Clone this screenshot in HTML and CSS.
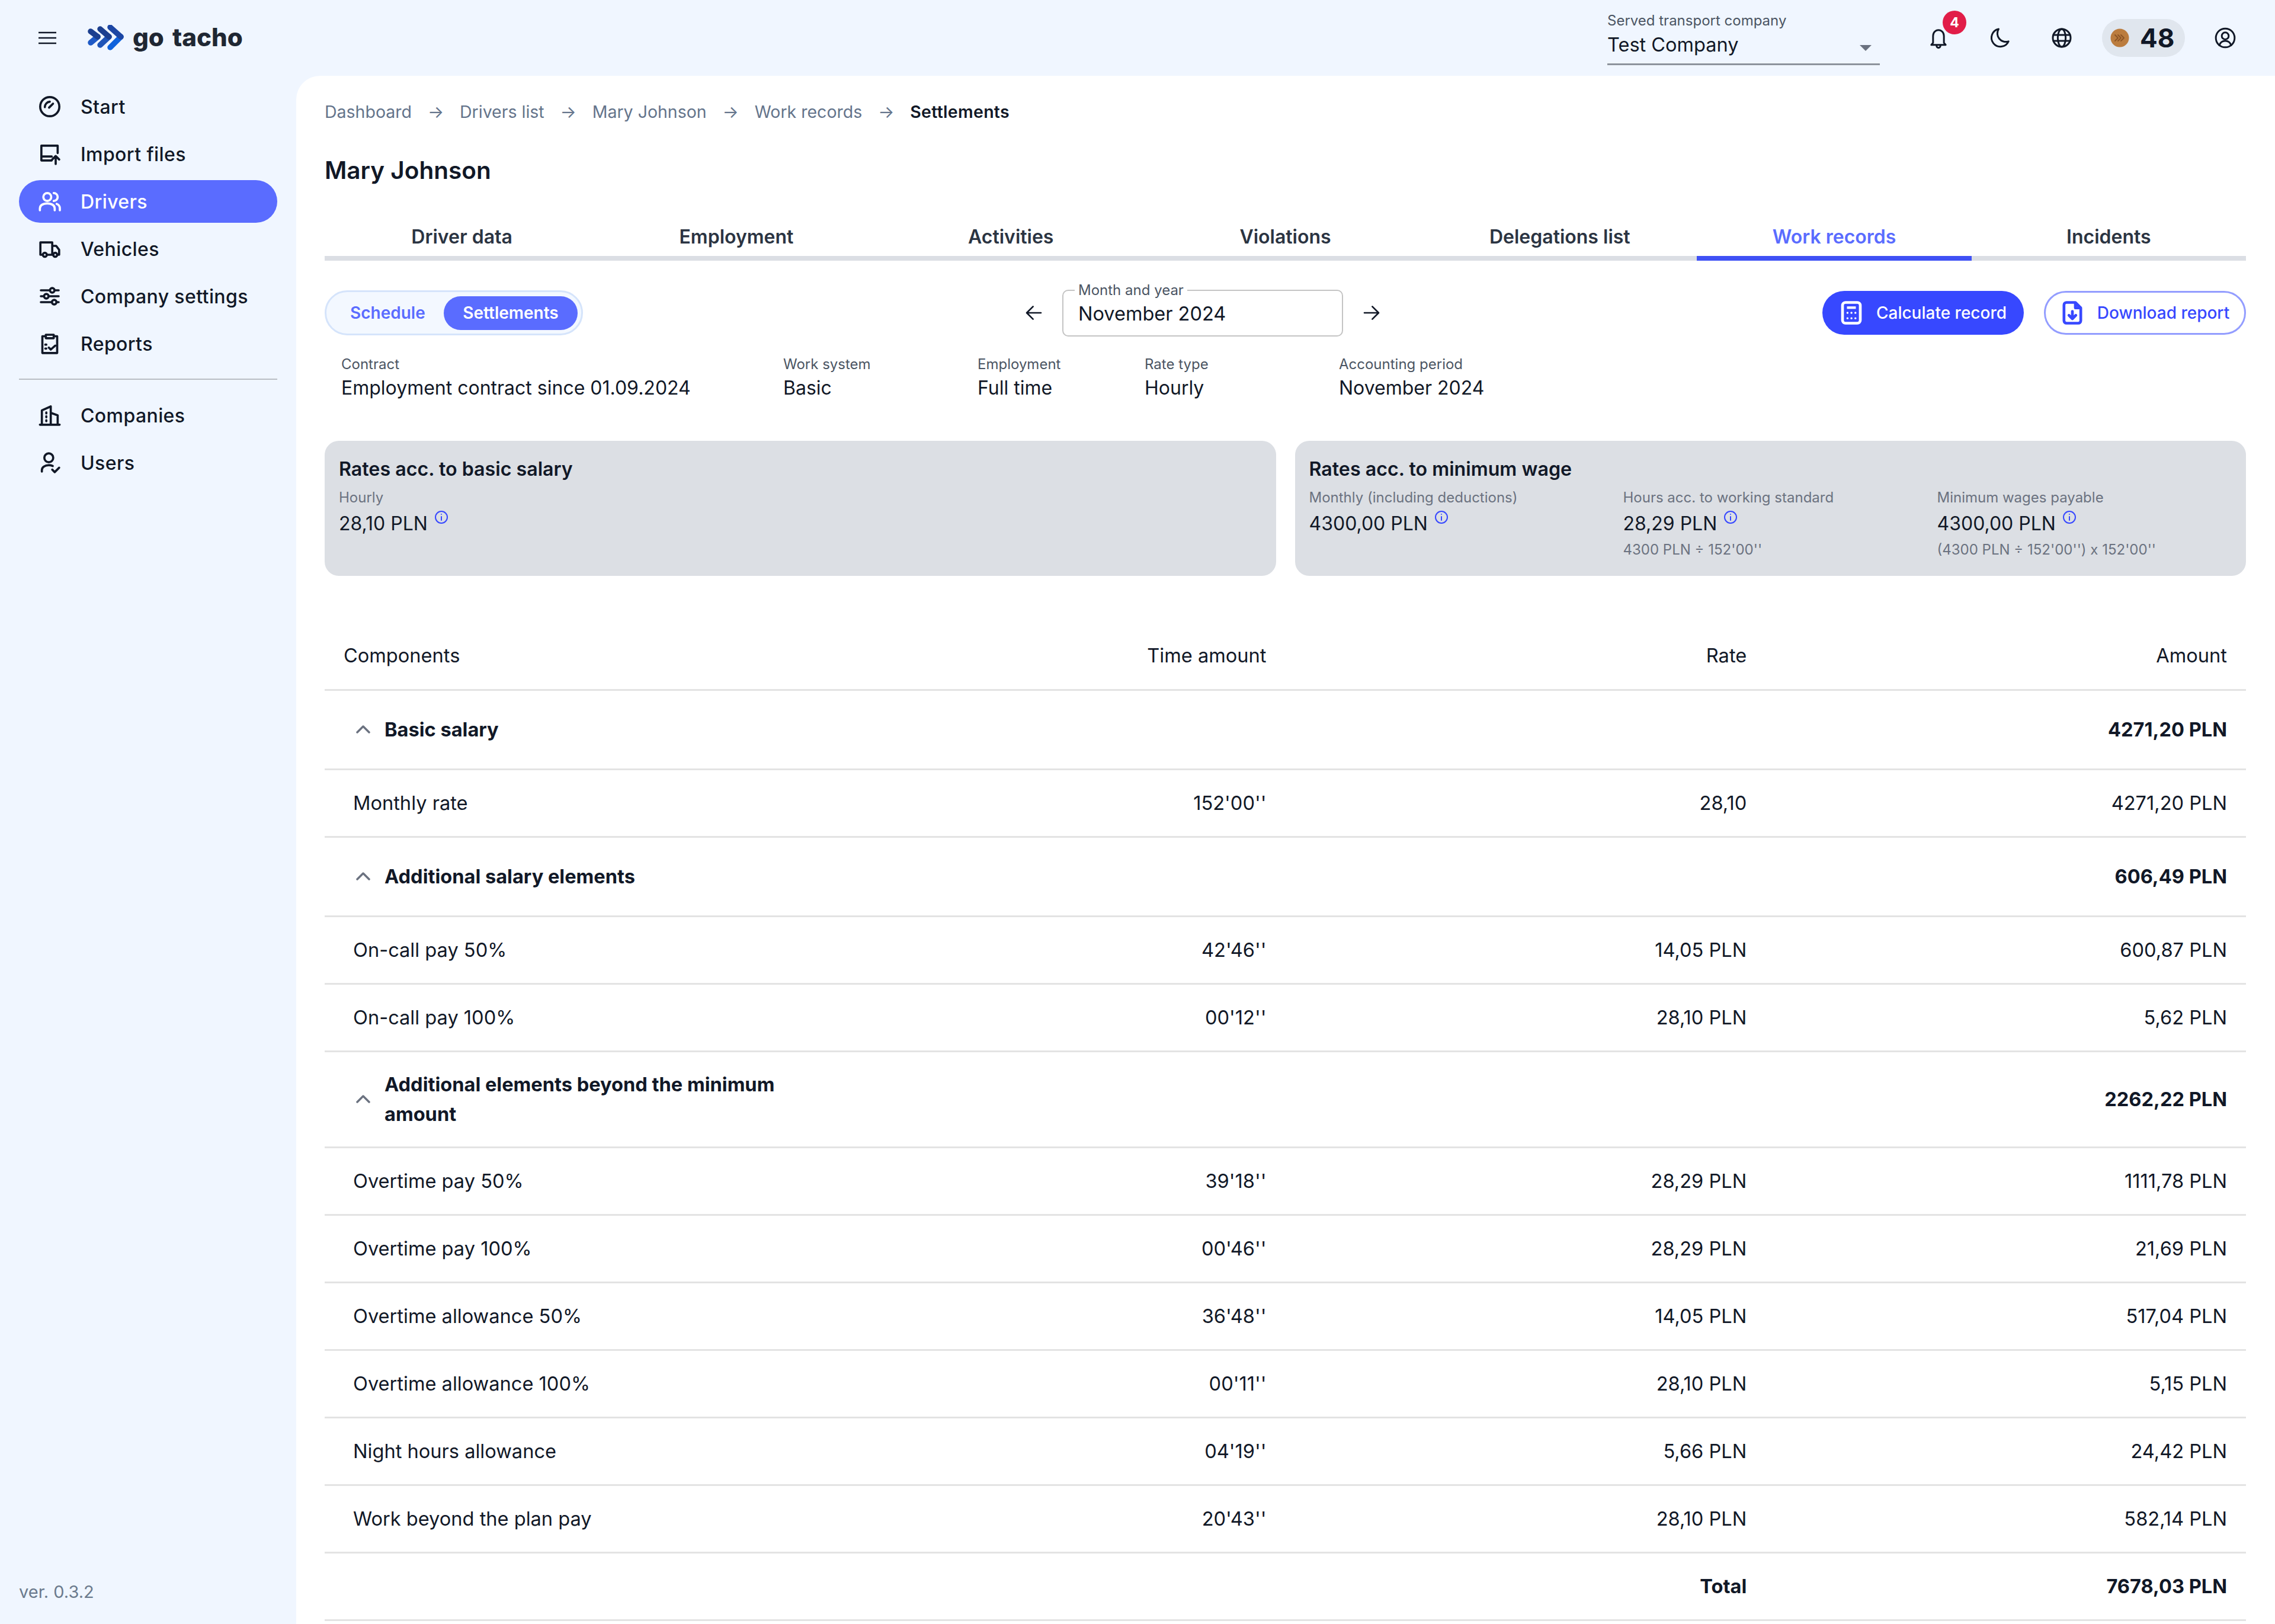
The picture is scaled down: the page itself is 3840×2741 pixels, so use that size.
FILE: index.html
```html
<!DOCTYPE html>
<html>

<head>
    <meta charset="UTF-8">
    <link rel="stylesheet" href="styles.css">
</head>

<body>
    <div class="app">
        <header class="topbar">
            <div class="brand">
                <svg class="burger" viewBox="0 0 30 22"><path d="M0 2h30M0 11h30M0 20h30" /></svg>
                <svg class="logo" viewBox="0 0 61 44">
                    <path d="M5 30l12-10" stroke="#1f5ac6" />
                    <path d="M5 11l12 9" stroke="#1c3f8f" />
                    <path d="M21 34l15-14" stroke="#1f55b8" />
                    <path d="M21 7l15 13" stroke="#1c3f8f" />
                    <path d="M38 38l18-18" stroke="#0f62dc" />
                    <path d="M38 4l18 16" stroke="#1c46a4" />
                </svg>
                <span class="brand-name">go tacho</span>
            </div>
            <div class="topbar-right">
                <div class="company-select">
                    <div class="company-label">Served transport company</div>
                    <div class="company-value">Test Company</div>
                    <span class="company-arrow"></span>
                </div>
                <div class="top-icon bell">
                    <svg viewBox="0 0 24 24"><path d="M6.500 17V10a5.500 6 0 0 1 11 0v7l1.800 2H4.700zM10 19.500a2 2.500 0 0 0 4 0" /></svg>
                    <span class="badge">4</span>
                </div>
                <div class="top-icon">
                    <svg viewBox="0 0 24 24"><path d="M10.500 3a9 9 0 1 0 10 12.500A8.500 8.500 0 0 1 10.500 3z" /></svg>
                </div>
                <div class="top-icon">
                    <svg viewBox="0 0 24 24"><circle cx="12" cy="12" r="9" /><ellipse cx="12" cy="12" rx="4" ry="9" /><path d="M3.600 9h16.800M3.600 15h16.800" /></svg>
                </div>
                <div class="points">
                    <svg class="coin" viewBox="0 0 32 32">
                        <circle cx="16" cy="16" r="15.500" fill="#bb7c3e" />
                        <path d="M8 11l5 5-5 5M13 11l5 5-5 5M18 11l5 5-5 5" fill="none" stroke="#8c5525" stroke-width="2" />
                    </svg>
                    <span>48</span>
                </div>
                <div class="top-icon">
                    <svg viewBox="0 0 24 24"><circle cx="12" cy="12" r="9.500" /><circle cx="12" cy="10" r="3.500" /><path d="M6 19.500c1-3 3.500-4.500 6-4.500s5 1.500 6 4.500" /></svg>
                </div>
            </div>
        </header>

        <aside class="sidebar">
            <nav class="nav">
                <a class="nav-item">
                    <svg viewBox="0 0 24 24"><circle cx="12" cy="12" r="9.700" /><path d="M7 12.500A5.500 5.500 0 0 1 12 7M11.300 13l4-4" /></svg>
                    Start
                </a>
                <a class="nav-item">
                    <svg viewBox="0 0 24 24"><path d="M20 11V3.500H3.500v15H14M3.500 14.500H14M18 22v-8M14.500 17.500L18 14l3.500 3.500" /></svg>
                    Import files
                </a>
                <a class="nav-item active">
                    <svg viewBox="0 0 24 24"><circle cx="9.500" cy="7.500" r="4" /><path d="M2 21v-2c0-3 3-5 7.500-5s7.500 2 7.500 5v2M16 3.500a4 4 0 0 1 0 8M19 14.500c2 .8 3.200 2.300 3.200 4.500v2" /></svg>
                    Drivers
                </a>
                <a class="nav-item">
                    <svg viewBox="0 0 24 24"><path d="M5 18H2.500V5.500h12V18H9M14.500 9h4l3 4v5H20M14.500 18h1" /><circle cx="7" cy="18" r="2" /><circle cx="17.500" cy="18" r="2" /></svg>
                    Vehicles
                </a>
                <a class="nav-item">
                    <svg viewBox="0 0 24 24"><path d="M3 6h9M17 6h4M3 12h3M11 12h10M3 18h11M19 18h2" /><circle cx="14.500" cy="6" r="2.300" /><circle cx="8.500" cy="12" r="2.300" /><circle cx="16.500" cy="18" r="2.300" /></svg>
                    Company settings
                </a>
                <a class="nav-item">
                    <svg viewBox="0 0 24 24"><path d="M8 4.500H4.500v17h15v-17H16M8 3h8v3.500H8zM7.500 13h1M7.500 17h1M11 16l2 2 4.500-4" /></svg>
                    Reports
                </a>
                <hr class="nav-divider">
                <a class="nav-item">
                    <svg viewBox="0 0 24 24"><path d="M2 21.500h20M4 21.500V7l9-4v18.500M13 9.500l7 2.500v9.500M8.500 9v1M8.500 13v1M8.500 17v1" /></svg>
                    Companies
                </a>
                <a class="nav-item">
                    <svg viewBox="0 0 24 24"><circle cx="11" cy="7" r="4.500" /><path d="M4 21v-1.500c0-3 3-5 7-5 1.500 0 2.800.3 4 .8M14.500 19l2.500 2.500 4.500-4.500" /></svg>
                    Users
                </a>
            </nav>
            <div class="version">ver. 0.3.2</div>
        </aside>

        <main class="content">
            <div class="breadcrumbs">
                <span>Dashboard</span><i class="crumb-arrow">→</i>
                <span>Drivers list</span><i class="crumb-arrow">→</i>
                <span>Mary Johnson</span><i class="crumb-arrow">→</i>
                <span>Work records</span><i class="crumb-arrow">→</i>
                <b>Settlements</b>
            </div>

            <h1 class="page-title">Mary Johnson</h1>

            <div class="tabs">
                <div class="tab">Driver data</div>
                <div class="tab">Employment</div>
                <div class="tab">Activities</div>
                <div class="tab">Violations</div>
                <div class="tab">Delegations list</div>
                <div class="tab current">Work records</div>
                <div class="tab">Incidents</div>
            </div>

            <div class="toolbar">
                <div class="segment">
                    <span class="segment-item">Schedule</span>
                    <span class="segment-item selected">Settlements</span>
                </div>
                <div class="period">
                    <svg class="period-arrow" viewBox="0 0 24 24"><path d="M21 12H3.500M11 4l-8 8 8 8" /></svg>
                    <fieldset class="period-field">
                        <legend>Month and year</legend>
                        <span>November 2024</span>
                    </fieldset>
                    <svg class="period-arrow" viewBox="0 0 24 24"><path d="M3 12h17.500M13 4l8 8-8 8" /></svg>
                </div>
                <div class="actions">
                    <button class="btn btn-fill">
                        <svg viewBox="0 0 24 24"><rect x="3" y="1.500" width="18" height="21" rx="3" /><rect x="7.500" y="5.500" width="9" height="2.500" fill="currentColor" stroke="none" /><path class="keys" d="M8 12h.1M12 12h.1M16 12h.1M8 17.500h.1M12 17.500h.1M16 17.500h.1" /></svg>
                        Calculate record
                    </button>
                    <button class="btn btn-line">
                        <svg viewBox="0 0 24 24"><path d="M15 1.500H6a2.500 2.500 0 0 0-2.500 2.500v16A2.500 2.500 0 0 0 6 22.500h12a2.500 2.500 0 0 0 2.500-2.500V7zM15 1.500V7h5.500M12 10.500v7M8.500 14.500L12 18l3.500-3.500" /></svg>
                        Download report
                    </button>
                </div>
            </div>

            <div class="info-row">
                <div><div class="info-label">Contract</div><div class="info-value">Employment contract since 01.09.2024</div></div>
                <div><div class="info-label">Work system</div><div class="info-value">Basic</div></div>
                <div><div class="info-label">Employment</div><div class="info-value">Full time</div></div>
                <div><div class="info-label">Rate type</div><div class="info-value">Hourly</div></div>
                <div><div class="info-label">Accounting period</div><div class="info-value">November 2024</div></div>
            </div>

            <div class="cards">
                <section class="card">
                    <h2 class="card-title">Rates acc. to basic salary</h2>
                    <div class="card-label">Hourly</div>
                    <div class="card-value">28,10 PLN <svg class="info-icon" viewBox="0 0 24 24"><circle cx="12" cy="12" r="10" /><path d="M12 11v6M12 7v.1" /></svg></div>
                </section>
                <section class="card">
                    <h2 class="card-title">Rates acc. to minimum wage</h2>
                    <div class="card-cols">
                        <div>
                            <div class="card-label">Monthly (including deductions)</div>
                            <div class="card-value">4300,00 PLN <svg class="info-icon" viewBox="0 0 24 24"><circle cx="12" cy="12" r="10" /><path d="M12 11v6M12 7v.1" /></svg></div>
                        </div>
                        <div>
                            <div class="card-label">Hours acc. to working standard</div>
                            <div class="card-value">28,29 PLN <svg class="info-icon" viewBox="0 0 24 24"><circle cx="12" cy="12" r="10" /><path d="M12 11v6M12 7v.1" /></svg></div>
                            <div class="card-label card-note">4300 PLN ÷ 152'00''</div>
                        </div>
                        <div>
                            <div class="card-label">Minimum wages payable</div>
                            <div class="card-value">4300,00 PLN <svg class="info-icon" viewBox="0 0 24 24"><circle cx="12" cy="12" r="10" /><path d="M12 11v6M12 7v.1" /></svg></div>
                            <div class="card-label card-note">(4300 PLN ÷ 152'00'') x 152'00''</div>
                        </div>
                    </div>
                </section>
            </div>

            <table class="records">
                <thead>
                    <tr><th>Components</th><th>Time amount</th><th>Rate</th><th>Amount</th></tr>
                </thead>
                <tbody>
                    <tr class="group">
                        <td colspan="3"><div class="group-name"><svg viewBox="0 0 24 14"><path d="M2 12L12 2l10 10" /></svg><span>Basic salary</span></div></td>
                        <td>4271,20 PLN</td>
                    </tr>
                    <tr><td>Monthly rate</td><td>152'00''</td><td>28,10</td><td>4271,20 PLN</td></tr>
                    <tr class="group">
                        <td colspan="3"><div class="group-name"><svg viewBox="0 0 24 14"><path d="M2 12L12 2l10 10" /></svg><span>Additional salary elements</span></div></td>
                        <td>606,49 PLN</td>
                    </tr>
                    <tr><td>On-call pay 50%</td><td>42'46''</td><td>14,05 PLN</td><td>600,87 PLN</td></tr>
                    <tr><td>On-call pay 100%</td><td>00'12''</td><td>28,10 PLN</td><td>5,62 PLN</td></tr>
                    <tr class="group tall">
                        <td colspan="3"><div class="group-name"><svg viewBox="0 0 24 14"><path d="M2 12L12 2l10 10" /></svg><span class="wrap">Additional elements beyond the minimum amount</span></div></td>
                        <td>2262,22 PLN</td>
                    </tr>
                    <tr><td>Overtime pay 50%</td><td>39'18''</td><td>28,29 PLN</td><td>1111,78 PLN</td></tr>
                    <tr><td>Overtime pay 100%</td><td>00'46''</td><td>28,29 PLN</td><td>21,69 PLN</td></tr>
                    <tr><td>Overtime allowance 50%</td><td>36'48''</td><td>14,05 PLN</td><td>517,04 PLN</td></tr>
                    <tr><td>Overtime allowance 100%</td><td>00'11''</td><td>28,10 PLN</td><td>5,15 PLN</td></tr>
                    <tr><td>Night hours allowance</td><td>04'19''</td><td>5,66 PLN</td><td>24,42 PLN</td></tr>
                    <tr><td>Work beyond the plan pay</td><td>20'43''</td><td>28,10 PLN</td><td>582,14 PLN</td></tr>
                    <tr class="total"><td></td><td></td><td>Total</td><td>7678,03 PLN</td></tr>
                </tbody>
            </table>
        </main>
    </div>
</body>

</html>
```

FILE: styles.css
```css
* {
    box-sizing: border-box;
}

html,
body {
    margin: 0;
    height: 2741px;
    overflow: hidden;
}

body {
    font-family: Inter, "Liberation Sans", sans-serif;
    color: #111827;
    background: #f0f6ff;
}

.app {
    display: grid;
    grid-template-columns: 500px 1fr;
    grid-template-rows: 128px 1fr;
    height: 2741px;
}

svg {
    fill: none;
    stroke: currentColor;
    stroke-width: 2;
    stroke-linecap: round;
    stroke-linejoin: round;
}

/* top bar */
.topbar {
    grid-column: 1 / 3;
    display: flex;
    justify-content: space-between;
    align-items: center;
}

.brand {
    display: flex;
    align-items: center;
    padding-left: 65px;
}

.burger {
    width: 30px;
    height: 22px;
    stroke-width: 2.500;
    stroke-linecap: butt;
}

.logo {
    width: 61px;
    height: 44px;
    margin-left: 53px;
    stroke-width: 9.500;
}

.brand-name {
    margin: -3px 0 0 15px;
    font-size: 42px;
    font-weight: 800;
    line-height: 56px;
    word-spacing: 5px;
    color: #1f2733;
}

.topbar-right {
    display: flex;
    align-items: center;
    height: 128px;
    padding-right: 32px;
}

.company-select {
    position: relative;
    width: 460px;
    height: 110px;
    margin-right: 47px;
    margin-top: -18px;
    padding-top: 20px;
    border-bottom: 3px solid #8d939c;
}

.company-label {
    font-size: 24px;
    line-height: 30px;
    color: #4b5563;
}

.company-value {
    margin-top: 4px;
    font-size: 32.500px;
    line-height: 44px;
}

.company-arrow {
    position: absolute;
    right: 14px;
    top: 76px;
    border-left: 10px solid transparent;
    border-right: 10px solid transparent;
    border-top: 10px solid #6b7280;
}

.top-icon {
    position: relative;
    width: 40px;
    height: 40px;
    margin: 0 32px;
}

.top-icon svg {
    display: block;
    width: 40px;
    height: 40px;
    stroke-width: 1.800;
}

.badge {
    position: absolute;
    left: 27px;
    top: -26px;
    width: 40px;
    height: 40px;
    border-radius: 50%;
    background: #e11d48;
    color: #fff;
    font-size: 23px;
    font-weight: 700;
    line-height: 40px;
    text-align: center;
}

.points {
    display: flex;
    align-items: center;
    gap: 18px;
    width: 140px;
    height: 64px;
    margin: 0 16px;
    padding-left: 14px;
    border-radius: 32px;
    background: #e0e6ee;
    font-size: 44px;
    font-weight: 700;
}

.coin {
    width: 32px;
    height: 32px;
    stroke: none;
}

/* sidebar */
.sidebar {
    position: relative;
    display: flex;
    flex-direction: column;
    justify-content: space-between;
    padding: 16px 32px 34px;
}

.nav-item {
    display: flex;
    align-items: center;
    gap: 32px;
    height: 72px;
    margin-bottom: 8px;
    padding-left: 32px;
    border-radius: 36px;
    font-size: 32px;
    font-weight: 500;
    letter-spacing: 0.4px;
}

.nav-item svg {
    width: 40px;
    height: 40px;
    flex-shrink: 0;
    stroke-width: 2.200;
}

.nav-item.active {
    background: #5a6cff;
    color: #fff;
}

.nav-divider {
    height: 2px;
    margin: 23px 0 24px;
    border: 0;
    background: #b9bdc4;
}

.version {
    font-size: 29px;
    line-height: 40px;
    color: #6b7a8d;
}

/* main panel */
.content {
    padding: 40px 49px 0 48px;
    border-top-left-radius: 40px;
    background: #fff;
    overflow: hidden;
}

.breadcrumbs {
    display: flex;
    align-items: center;
    height: 40px;
    font-size: 28.500px;
    color: #64748b;
}

.breadcrumbs b {
    font-weight: 600;
    letter-spacing: 0.3px;
    color: #111827;
}

.crumb-arrow {
    width: 81px;
    font-style: normal;
    text-align: center;
}

.page-title {
    margin: 50px 0 0;
    font-size: 40.500px;
    font-weight: 600;
    line-height: 60px;
}

.tabs {
    display: flex;
    margin-top: 48px;
    border-bottom: 8px solid #dbdee4;
}

.tab {
    flex: 1;
    height: 66px;
    font-size: 32px;
    font-weight: 600;
    line-height: 67px;
    text-align: center;
    color: #2b3442;
    position: relative;
}

.tab.current {
    color: #5a6cff;
}

.tab.current::after {
    content: "";
    position: absolute;
    left: 0;
    right: 0;
    bottom: -8px;
    height: 8px;
    background: #3f51f5;
}

.toolbar {
    display: flex;
    justify-content: space-between;
    align-items: center;
    margin-top: 50px;
    height: 76px;
}

.segment {
    display: flex;
    align-items: center;
    width: 436px;
    height: 76px;
    padding: 0 6px 0 12px;
    border: 3px solid #d5e4fb;
    border-radius: 38px;
    background: #f3f8ff;
    font-size: 28px;
    font-weight: 600;
    color: #5a6cff;
}

.segment-item {
    padding: 0 28px;
    white-space: nowrap;
}

.segment-item.selected {
    width: 226px;
    height: 57px;
    margin-left: auto;
    padding: 0;
    border-radius: 29px;
    background: #5a6cff;
    color: #fff;
    line-height: 57px;
    text-align: center;
}

.period {
    display: flex;
    align-items: center;
    gap: 32px;
}

.period-arrow {
    width: 32px;
    height: 32px;
}

.period-field {
    width: 474px;
    height: 92px;
    margin: -13px 0 0;
    padding: 0 19px;
    border: 2px solid #c4c4c4;
    border-radius: 10px;
    font-size: 32.500px;
}

.period-field legend {
    margin-left: 0;
    padding: 0 6px;
    font-size: 24px;
    line-height: 28px;
    color: #4b5563;
}

.period-field span {
    display: block;
    margin-top: 6px;
    padding-left: 6px;
}

.actions {
    display: flex;
    gap: 34px;
}

.btn {
    display: flex;
    align-items: center;
    justify-content: center;
    gap: 22px;
    height: 74px;
    border-radius: 37px;
    font-family: inherit;
    font-size: 28px;
    font-weight: 500;
}

.btn svg {
    width: 40px;
    height: 40px;
    stroke-width: 2.800;
}

.btn .keys {
    stroke-width: 2;
}

.btn-fill {
    width: 340px;
    border: 0;
    background: #3748ff;
    color: #fff;
}

.btn-line {
    width: 341px;
    border: 3px solid #939dff;
    background: #fff;
    color: #3748ff;
}

.info-row {
    display: grid;
    grid-template-columns: 746px 328px 282px 328px auto;
    margin-top: 33px;
    padding-left: 28px;
}

.info-label {
    font-size: 24px;
    line-height: 32px;
    color: #4b5563;
}

.info-value {
    font-size: 32px;
    line-height: 48px;
}

.cards {
    display: grid;
    grid-template-columns: 1fr 1fr;
    gap: 32px;
    margin-top: 65px;
}

.card {
    height: 228px;
    padding: 26px 24px 0;
    border-radius: 24px;
    background: #dcdfe4;
}

.card-title {
    margin: 0;
    font-size: 32.200px;
    font-weight: 600;
    line-height: 44px;
}

.card-label {
    margin-top: 10px;
    font-size: 24px;
    line-height: 32px;
    color: #6b7280;
}

.card-value {
    margin-top: 4px;
    font-size: 32px;
    line-height: 48px;
}

.card-note {
    margin-top: 4px;
}

.info-icon {
    width: 24px;
    height: 24px;
    margin-left: 2px;
    vertical-align: 10px;
    color: #3748ff;
}

.card-cols {
    display: grid;
    grid-template-columns: 530px 530px 1fr;
}

/* table */
.records {
    width: 100%;
    margin-top: 78px;
    border-collapse: collapse;
    table-layout: fixed;
    font-size: 32.600px;
}

.records th,
.records td {
    height: 114px;
    padding: 0 32px;
    border-bottom: 3px solid #e3e3e3;
    text-align: right;
    font-weight: 400;
}

.records th:first-child {
    text-align: left;
}

.records td:first-child {
    padding-left: 48px;
    text-align: left;
}

.group td {
    height: 134px;
    font-weight: 700;
}

.group.tall td {
    height: 162px;
}

.group-name {
    display: flex;
    align-items: center;
    gap: 24px;
    margin-left: 5px;
    line-height: 50px;
}

.group-name svg {
    width: 24px;
    height: 14px;
    flex-shrink: 0;
    stroke-width: 3.500;
    color: #6b7280;
}

.group-name .wrap {
    width: 680px;
}

.total td {
    font-weight: 700;
}
```
